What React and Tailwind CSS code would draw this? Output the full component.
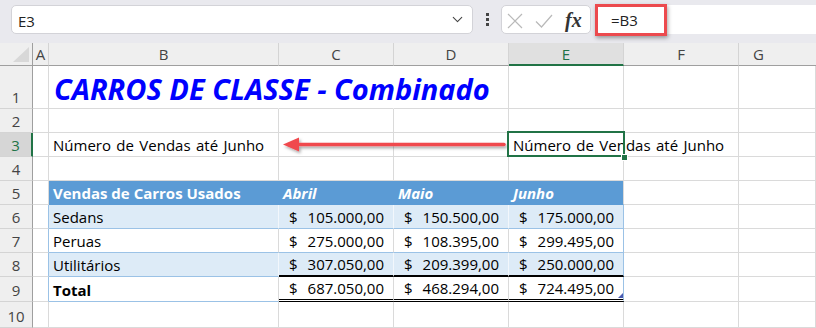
import React from "react";
import { ChevronDown } from "lucide-react";

const CELL = "shrink-0 relative flex items-end border-r border-b";
const GRID = "border-[#dadada]";

function RowHead({ n, h, sel }) {
  return (
    <div
      className={
        "shrink-0 w-[33px] flex items-end justify-center pb-[1px] border-b border-b-[#d4d4d4] " +
        h +
        (sel
          ? " bg-[#d6d6d6] border-r-2 border-r-[#217346] text-[#217346]"
          : " bg-[#efefef] border-r border-r-[#9f9f9f] text-[#444]")
      }
    >
      {n}
    </div>
  );
}

function Money({ v, cls }) {
  return (
    <div className={CELL + " w-[115px] justify-between pl-[10px] pr-[9px] pb-[1px] " + cls}>
      <span>$</span>
      <span>{v}</span>
    </div>
  );
}

export default function App() {
  return (
    <div className="w-[816px] h-[328px] overflow-hidden bg-white font-['Open_Sans','Noto_Sans',sans-serif] text-[15px] leading-[20px] text-black">
      {/* toolbar */}
      <div className="h-[43px] bg-[#e9e9ee] flex items-start pt-[5px]">
        <div className="ml-[11px] w-[462px] h-[29px] bg-white rounded-[5px] border border-[#d3d3d8] flex items-center justify-between pl-[6px] pr-[6px]">
          <span className="text-[15px] text-[#222] pt-[3px]">E3</span>
          <ChevronDown size={17} strokeWidth={1.5} className="text-[#444]" />
        </div>
        <div className="w-[28px] h-[29px] flex flex-col items-center justify-center gap-[2px]">
          <div className="w-[3px] h-[3px] bg-[#444]"></div>
          <div className="w-[3px] h-[3px] bg-[#444]"></div>
          <div className="w-[3px] h-[3px] bg-[#444]"></div>
        </div>
        <div className="w-[90px] h-[29px] bg-white rounded-[5px] border border-[#d3d3d8] flex items-center pl-[5px]">
          <svg width="16" height="16" viewBox="0 0 16 16" className="mt-[2px]">
            <path d="M1 1 L15 15 M15 1 L1 15" stroke="#b9b9b9" strokeWidth="1.2" fill="none" />
          </svg>
          <svg width="18" height="14" viewBox="0 0 18 14" className="ml-[12px] mt-[2px]">
            <path d="M1 7.5 L6.5 13 L17 1" stroke="#b9b9b9" strokeWidth="1.2" fill="none" />
          </svg>
          <span className="ml-[12px] font-['Liberation_Serif',serif] italic font-bold text-[20px] text-[#333] leading-[20px]">fx</span>
        </div>
        <div className="ml-[6px] flex-1 h-[29px] bg-white rounded-l-[5px] relative">
          <div className="absolute left-[-2px] top-[-1px] w-[72px] h-[32px] border-[3px] border-[#ec4a4e] shadow-[1px_2px_4px_rgba(0,0,0,0.35)]"></div>
          <span className="absolute left-[14px] top-[5px] text-[15px] text-[#222]">=B3</span>
        </div>
      </div>

      {/* column headers */}
      <div className="flex h-[23px] bg-[#efefef] text-[#444]">
        <div className="w-[33px] shrink-0 border-r border-b border-[#9f9f9f] relative">
          <svg className="absolute right-[3px] bottom-[3px]" width="16" height="15" viewBox="0 0 16 15">
            <polygon points="16,0 16,15 0,15" fill="#d8d8d8" />
          </svg>
        </div>
        <div className="w-[16px] shrink-0 border-r border-r-[#d4d4d4] border-b border-b-[#9f9f9f] flex items-end justify-center pb-[1px]">A</div>
        <div className="w-[230px] shrink-0 border-r border-r-[#d4d4d4] border-b border-b-[#9f9f9f] flex items-end justify-center pb-[1px]">B</div>
        <div className="w-[115px] shrink-0 border-r border-r-[#d4d4d4] border-b border-b-[#9f9f9f] flex items-end justify-center pb-[1px]">C</div>
        <div className="w-[115px] shrink-0 border-r border-r-[#d4d4d4] border-b border-b-[#9f9f9f] flex items-end justify-center pb-[1px]">D</div>
        <div className="w-[115px] shrink-0 border-r border-r-[#d4d4d4] border-b-2 border-b-[#217346] bg-[#e0e0e0] text-[#217346] flex items-end justify-center">E</div>
        <div className="w-[115px] shrink-0 border-r border-r-[#d4d4d4] border-b border-b-[#9f9f9f] flex items-end justify-center pb-[1px]">F</div>
        <div className="flex-1 border-b border-b-[#9f9f9f] flex items-end justify-center pb-[1px] pr-[38px]">G</div>
      </div>

      {/* row 1 */}
      <div className="flex h-[43px]">
        <RowHead n="1" h="h-[43px]" />
        <div className={CELL + " " + GRID + " w-[16px]"}></div>
        <div className={CELL + " border-r-transparent border-b-[#dadada] w-[230px] pl-[5px]"}>
          <span className="whitespace-nowrap font-bold italic text-[29px] leading-[38px] text-[#0000ff] relative z-10">
            CARROS DE CLASSE - Combinado
          </span>
        </div>
        <div className={CELL + " border-r-transparent border-b-[#dadada] w-[115px]"}></div>
        <div className={CELL + " " + GRID + " w-[115px]"}></div>
        <div className={CELL + " " + GRID + " w-[115px]"}></div>
        <div className={CELL + " " + GRID + " w-[115px]"}></div>
        <div className={CELL + " " + GRID + " flex-1"}></div>
      </div>

      {/* row 2 */}
      <div className="flex h-[24px]">
        <RowHead n="2" h="h-[24px]" />
        <div className={CELL + " " + GRID + " w-[16px]"}></div>
        <div className={CELL + " " + GRID + " w-[230px]"}></div>
        <div className={CELL + " " + GRID + " w-[115px]"}></div>
        <div className={CELL + " " + GRID + " w-[115px]"}></div>
        <div className={CELL + " " + GRID + " w-[115px]"}></div>
        <div className={CELL + " " + GRID + " w-[115px]"}></div>
        <div className={CELL + " " + GRID + " flex-1"}></div>
      </div>

      {/* row 3 */}
      <div className="flex h-[24px] relative">
        <RowHead n="3" h="h-[24px]" sel />
        <div className={CELL + " " + GRID + " w-[16px]"}></div>
        <div className={CELL + " " + GRID + " w-[230px] pl-[4px] pb-[1px]"}>
          <span className="whitespace-nowrap [word-spacing:1.5px]">Número de Vendas até Junho</span>
        </div>
        <div className={CELL + " " + GRID + " w-[115px]"}></div>
        <div className={CELL + " " + GRID + " w-[115px]"}></div>
        <div className={CELL + " border-r-transparent border-b-[#dadada] w-[115px] pl-[4px] pb-[1px]"}>
          <span className="whitespace-nowrap relative z-10 [word-spacing:1.5px]">Número de Vendas até Junho</span>
          <div className="absolute left-[-2px] top-[-2px] w-[118px] h-[26px] border-2 border-[#217346] z-20"></div>
          <div className="absolute right-[-5px] bottom-[-5px] w-[7px] h-[7px] bg-[#217346] border border-white z-30"></div>
        </div>
        <div className={CELL + " " + GRID + " w-[115px]"}></div>
        <div className={CELL + " " + GRID + " flex-1"}></div>
        {/* arrow */}
        <svg className="absolute left-[280px] top-[2px] z-10" width="232" height="22" viewBox="0 0 232 22">
          <defs>
            <filter id="sh" x="-10%" y="-50%" width="120%" height="200%">
              <feDropShadow dx="1.5" dy="2" stdDeviation="1.5" floodColor="#000" floodOpacity="0.35" />
            </filter>
          </defs>
          <g filter="url(#sh)">
            <line x1="16" y1="9.5" x2="224" y2="9.5" stroke="#f04a4e" strokeWidth="3.5" strokeLinecap="round" />
            <polygon points="3,9.5 19,2.5 19,16.5" fill="#f04a4e" />
          </g>
        </svg>
      </div>

      {/* row 4 */}
      <div className="flex h-[24px]">
        <RowHead n="4" h="h-[24px]" />
        <div className={CELL + " " + GRID + " w-[16px]"}></div>
        <div className={CELL + " " + GRID + " w-[230px]"}></div>
        <div className={CELL + " " + GRID + " w-[115px]"}></div>
        <div className={CELL + " " + GRID + " w-[115px]"}></div>
        <div className={CELL + " " + GRID + " w-[115px]"}></div>
        <div className={CELL + " " + GRID + " w-[115px]"}></div>
        <div className={CELL + " " + GRID + " flex-1"}></div>
      </div>

      {/* row 5: table header */}
      <div className="flex h-[24px]">
        <RowHead n="5" h="h-[24px]" />
        <div className={CELL + " " + GRID + " w-[16px]"}></div>
        <div className={CELL + " border-[#5b9bd5] bg-[#5b9bd5] w-[230px] pl-[4px] pb-[1px] text-white font-bold"}>
          <span className="whitespace-nowrap">Vendas de Carros Usados</span>
        </div>
        <div className={CELL + " border-[#5b9bd5] bg-[#5b9bd5] w-[115px] pl-[4px] pb-[1px] text-white font-bold italic"}>Abril</div>
        <div className={CELL + " border-[#5b9bd5] bg-[#5b9bd5] w-[115px] pl-[4px] pb-[1px] text-white font-bold italic"}>Maio</div>
        <div className={CELL + " border-r-[#dadada] border-b-[#5b9bd5] bg-[#5b9bd5] w-[115px] pl-[4px] pb-[1px] text-white font-bold italic"}>Junho</div>
        <div className={CELL + " " + GRID + " w-[115px]"}></div>
        <div className={CELL + " " + GRID + " flex-1"}></div>
      </div>

      {/* row 6 */}
      <div className="flex h-[24px]">
        <RowHead n="6" h="h-[24px]" />
        <div className={CELL + " border-r-[#9bc2e6] border-b-[#dadada] w-[16px]"}></div>
        <div className={CELL + " border-r-[#f2f7fc] border-b-[#9bc2e6] bg-[#ddebf7] w-[230px] pl-[4px] pb-[1px]"}>Sedans</div>
        <Money v="105.000,00" cls="border-r-[#f2f7fc] border-b-[#9bc2e6] bg-[#ddebf7]" />
        <Money v="150.500,00" cls="border-r-[#f2f7fc] border-b-[#9bc2e6] bg-[#ddebf7]" />
        <Money v="175.000,00" cls="border-r-[#9bc2e6] border-b-[#9bc2e6] bg-[#ddebf7]" />
        <div className={CELL + " " + GRID + " w-[115px]"}></div>
        <div className={CELL + " " + GRID + " flex-1"}></div>
      </div>

      {/* row 7 */}
      <div className="flex h-[24px]">
        <RowHead n="7" h="h-[24px]" />
        <div className={CELL + " border-r-[#9bc2e6] border-b-[#dadada] w-[16px]"}></div>
        <div className={CELL + " border-r-[#dadada] border-b-[#9bc2e6] w-[230px] pl-[4px] pb-[1px]"}>Peruas</div>
        <Money v="275.000,00" cls="border-r-[#dadada] border-b-[#9bc2e6]" />
        <Money v="108.395,00" cls="border-r-[#dadada] border-b-[#9bc2e6]" />
        <Money v="299.495,00" cls="border-r-[#9bc2e6] border-b-[#9bc2e6]" />
        <div className={CELL + " " + GRID + " w-[115px]"}></div>
        <div className={CELL + " " + GRID + " flex-1"}></div>
      </div>

      {/* row 8 */}
      <div className="flex h-[24px]">
        <RowHead n="8" h="h-[24px]" />
        <div className={CELL + " border-r-[#9bc2e6] border-b-[#dadada] w-[16px]"}></div>
        <div className={CELL + " border-r-[#f2f7fc] border-b-[#9bc2e6] bg-[#ddebf7] w-[230px] pl-[4px] pb-[1px]"}>Utilitários</div>
        <Money v="307.050,00" cls="border-r-[#f2f7fc] border-b-2 border-b-black bg-[#ddebf7]" />
        <Money v="209.399,00" cls="border-r-[#f2f7fc] border-b-2 border-b-black bg-[#ddebf7]" />
        <Money v="250.000,00" cls="border-r-[#9bc2e6] border-b-2 border-b-black bg-[#ddebf7]" />
        <div className={CELL + " " + GRID + " w-[115px]"}></div>
        <div className={CELL + " " + GRID + " flex-1"}></div>
      </div>

      {/* row 9 */}
      <div className="flex h-[25px]">
        <RowHead n="9" h="h-[25px]" />
        <div className={CELL + " border-r-[#9bc2e6] border-b-[#dadada] w-[16px]"}></div>
        <div className={CELL + " border-r-[#dadada] border-b-[#9bc2e6] w-[230px] pl-[4px] pb-[1px] font-bold"}>Total</div>
        <Money v="687.050,00" cls="border-r-[#dadada] border-b-[3px] border-double border-b-black" />
        <Money v="468.294,00" cls="border-r-[#dadada] border-b-[3px] border-double border-b-black" />
        <div className={CELL + " w-[115px] justify-between pl-[10px] pr-[9px] pb-[1px] border-r-[#9bc2e6] border-b-[3px] border-double border-b-black"}>
          <span>$</span>
          <span>724.495,00</span>
          <svg className="absolute right-[0px] bottom-[1px]" width="5" height="5" viewBox="0 0 5 5">
            <polygon points="5,0 5,5 0,5" fill="#4a5bb0" />
          </svg>
        </div>
        <div className={CELL + " " + GRID + " w-[115px]"}></div>
        <div className={CELL + " " + GRID + " flex-1"}></div>
      </div>

      {/* row 10 */}
      <div className="flex h-[26px]">
        <RowHead n="10" h="h-[26px]" />
        <div className={CELL + " " + GRID + " w-[16px]"}></div>
        <div className={CELL + " " + GRID + " w-[230px]"}></div>
        <div className={CELL + " " + GRID + " w-[115px]"}></div>
        <div className={CELL + " " + GRID + " w-[115px]"}></div>
        <div className={CELL + " " + GRID + " w-[115px]"}></div>
        <div className={CELL + " " + GRID + " w-[115px]"}></div>
        <div className={CELL + " " + GRID + " flex-1"}></div>
      </div>
    </div>
  );
}
